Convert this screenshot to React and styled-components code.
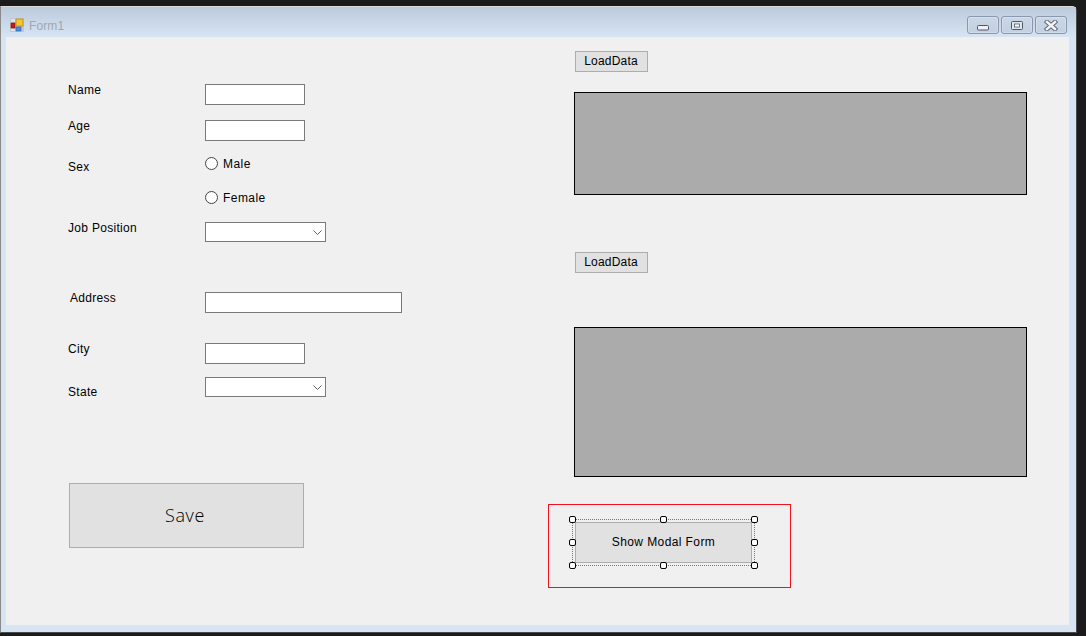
import styled, { createGlobalStyle } from "styled-components";

const GlobalStyle = createGlobalStyle`
    html, body {
        margin: 0;
        padding: 0;
        background: #1b1b1b;
    }
    * {
        box-sizing: border-box;
    }
`;

const FONT = `"Liberation Sans", Arial, sans-serif`;

// far edge of the selection frame, its dotted line sits 1px outside the padding box
const FAR = "calc(100% + 1px)";

function AppIcon() {
    return (
        <svg width="14" height="14" viewBox="0 0 14 14">
            <rect x="0" y="0" width="14" height="14" fill="#c4c8cd" />
            <rect x="1" y="1" width="4" height="3" fill="#dfe3e8" />
            <rect x="1" y="11" width="4" height="2" fill="#dfe3e8" />
            <rect x="1" y="5" width="4" height="5" fill="#c81a1a" stroke="#7a1010" strokeWidth="0.6" />
            <rect x="6" y="1" width="7" height="7" fill="#f6c531" stroke="#b98a12" strokeWidth="0.8" />
            <rect x="6" y="9" width="5" height="4" fill="#4a8be0" stroke="#2b5fa8" strokeWidth="0.6" />
        </svg>
    );
}

function MinGlyph() {
    return (
        <svg width="12" height="6" viewBox="0 0 12 6">
            <rect x="0.5" y="0.5" width="11" height="4.5" rx="1" fill="#eef1f5" stroke="#4e5568" />
        </svg>
    );
}

function MaxGlyph() {
    return (
        <svg width="12" height="9" viewBox="0 0 12 9">
            <rect x="0.5" y="0.5" width="11" height="8" rx="1" fill="#dfe6ee" stroke="#4e5568" />
            <rect x="3.5" y="3" width="5" height="3" fill="#fff" stroke="#4e5568" strokeWidth="0.8" />
        </svg>
    );
}

function CloseGlyph() {
    return (
        <svg width="14" height="11" viewBox="0 0 14 11">
            <path d="M3 2 L11 9 M11 2 L3 9" stroke="#5a6274" strokeWidth="4.4" strokeLinecap="square" />
            <path d="M3 2 L11 9 M11 2 L3 9" stroke="#f2f4f7" strokeWidth="2.6" strokeLinecap="square" />
        </svg>
    );
}

function Chevron() {
    return (
        <svg width="9" height="5" viewBox="0 0 9 5">
            <path d="M0.5 0.5 L4.5 4.5 L8.5 0.5" fill="none" stroke="#606060" strokeWidth="1" />
        </svg>
    );
}

function App() {
    return (
        <Page>
            <GlobalStyle />
            <Window>
                <TitleBar>
                    <AppIcon />
                    <TitleText>Form1</TitleText>
                    <WindowButtons>
                        <WindowButton $low><MinGlyph /></WindowButton>
                        <WindowButton><MaxGlyph /></WindowButton>
                        <WindowButton><CloseGlyph /></WindowButton>
                    </WindowButtons>
                </TitleBar>

                <Canvas>
                    <LeftColumn>
                        <Row $top={47}>
                            <Label $dy={-1}>Name</Label>
                            <TextBox />
                        </Row>
                        <Row $top={15}>
                            <Label $dy={-1}>Age</Label>
                            <TextBox />
                        </Row>
                        <Row $top={13}>
                            <Label $dy={6}>Sex</Label>
                            <Radio>
                                <RadioDot />
                                <RadioText>Male</RadioText>
                            </Radio>
                        </Row>
                        <Row $top={14}>
                            <span />
                            <Radio>
                                <RadioDot />
                                <RadioText>Female</RadioText>
                            </Radio>
                        </Row>
                        <Row $top={16}>
                            <Label $dy={-1}>Job Position</Label>
                            <ComboBox><Chevron /></ComboBox>
                        </Row>
                        <Row $top={50}>
                            <Label $dy={-1} $indent={2}>Address</Label>
                            <TextBox $width={197} />
                        </Row>
                        <Row $top={30}>
                            <Label $dy={-1}>City</Label>
                            <TextBox />
                        </Row>
                        <Row $top={13}>
                            <Label $dy={8}>State</Label>
                            <ComboBox><Chevron /></ComboBox>
                        </Row>
                        <SaveButton>Save</SaveButton>
                    </LeftColumn>

                    <RightColumn>
                        <LoadButton $top={14}>LoadData</LoadButton>
                        <DataGrid $top={20} $height={103} />
                        <LoadButton $top={57}>LoadData</LoadButton>
                        <DataGrid $top={54} $height={150} />

                        <Highlight>
                            <Selection>
                                <ModalButton>Show Modal Form</ModalButton>
                                <Handle $x="0%" $y="0%" />
                                <Handle $x="50%" $y="0%" />
                                <Handle $x={FAR} $y="0%" />
                                <Handle $x="0%" $y="50%" />
                                <Handle $x={FAR} $y="50%" />
                                <Handle $x="0%" $y={FAR} />
                                <Handle $x="50%" $y={FAR} />
                                <Handle $x={FAR} $y={FAR} />
                            </Selection>
                        </Highlight>
                    </RightColumn>
                </Canvas>
            </Window>
        </Page>
    );
}

const Page = styled.div`
    width: 1086px;
    height: 636px;
    padding-top: 6px;
    overflow: hidden;
    background: #1b1b1b;
    font-family: ${FONT};
`;

const Window = styled.div`
    width: 1077px;
    height: 627px;
    display: flex;
    flex-direction: column;
    padding: 0 7px 7px 5px;
    background: #d6e4f3;
    border: 1px solid #4a4a4a;
    border-top-color: #d8d8d8;
    border-left-color: #8a8a8a;
    border-top-right-radius: 5px;
`;

const TitleBar = styled.div`
    height: 30px;
    margin: 0 -7px 0 -5px;
    padding: 6px 9px 0 9px;
    display: flex;
    align-items: center;
    flex-shrink: 0;
    background: linear-gradient(#bccbdc, #d6e4f3);
`;

const TitleText = styled.span`
    margin-left: 5px;
    padding-top: 2px;
    font-size: 12px;
    letter-spacing: 0.1px;
    color: #a3a7ad;
`;

const WindowButtons = styled.div`
    margin-left: auto;
    display: flex;
    gap: 2px;
`;

const WindowButton = styled.div`
    width: 32px;
    height: 18px;
    padding-top: ${({ $low }) => ($low ? 5 : 0)}px;
    display: flex;
    align-items: center;
    justify-content: center;
    border: 1px solid #8a97ae;
    border-radius: 3px;
    background: linear-gradient(#cad7e5, #c2d0e0);
    box-shadow: inset 0 0 0 1px rgba(255, 255, 255, 0.25);
`;

const Canvas = styled.div`
    flex: 1;
    display: flex;
    background: #f0f0f0;
`;

const LeftColumn = styled.div`
    width: 568px;
    padding-left: 62px;
    flex-shrink: 0;
`;

const Row = styled.div`
    margin-top: ${({ $top }) => $top}px;
    display: grid;
    grid-template-columns: 137px 1fr;
    align-items: start;
`;

const Label = styled.div`
    margin-top: ${({ $dy }) => $dy}px;
    padding-left: ${({ $indent }) => $indent || 0}px;
    font-size: 12px;
    line-height: 14px;
    letter-spacing: 0.3px;
    color: #000;
`;

const TextBox = styled.div`
    width: ${({ $width }) => $width || 100}px;
    height: 21px;
    background: #fff;
    border: 1px solid #7a7a7a;
`;

const ComboBox = styled.div`
    width: 121px;
    height: 20px;
    padding-right: 3px;
    display: flex;
    align-items: center;
    justify-content: flex-end;
    background: #fff;
    border: 1px solid #7a7a7a;
`;

const Radio = styled.div`
    height: 18px;
    display: flex;
    align-items: center;
    gap: 5px;
    font-size: 12px;
    letter-spacing: 0.45px;
    color: #000;
`;

const RadioText = styled.span`
    padding-top: 2px;
`;

const RadioDot = styled.span`
    width: 13px;
    height: 13px;
    border-radius: 50%;
    background: #fff;
    border: 1px solid #444;
`;

const SaveButton = styled.div`
    width: 235px;
    height: 65px;
    margin: 84px 0 0 1px;
    padding: 0 3px 2px 0;
    display: flex;
    align-items: center;
    justify-content: center;
    font-family: "Open Sans", ${FONT};
    font-size: 18px;
    font-weight: 300;
    letter-spacing: 0.6px;
    color: #000;
    background: #e1e1e1;
    border: 1px solid #adadad;
`;

const RightColumn = styled.div`
    flex: 1;
`;

const LoadButton = styled.div`
    width: 73px;
    height: 21px;
    margin: ${({ $top }) => $top}px 0 0 1px;
    padding: 0 1px 1px 0;
    display: flex;
    align-items: center;
    justify-content: center;
    font-size: 12px;
    letter-spacing: 0.2px;
    color: #000;
    background: #e1e1e1;
    border: 1px solid #adadad;
`;

const DataGrid = styled.div`
    width: 453px;
    height: ${({ $height }) => $height}px;
    margin-top: ${({ $top }) => $top}px;
    background: #ababab;
    border: 1px solid #000;
`;

const Highlight = styled.div`
    width: 243px;
    height: 84px;
    margin: 27px 0 0 -26px;
    padding: 14px 0 0 23px;
    border: 1px solid #f5101e;
`;

const Selection = styled.div`
    position: relative;
    width: 183px;
    height: 47px;
    padding: 2px;
    border: 1px dotted #777;
`;

const ModalButton = styled.div`
    height: 100%;
    padding-bottom: 1px;
    display: flex;
    align-items: center;
    justify-content: center;
    font-size: 12px;
    letter-spacing: 0.4px;
    color: #000;
    background: #e1e1e1;
    border: 1px solid #adadad;
`;

const Handle = styled.span`
    position: absolute;
    left: ${({ $x }) => $x};
    top: ${({ $y }) => $y};
    width: 7px;
    height: 7px;
    transform: translate(calc(-50% - 0.5px), calc(-50% - 0.5px));
    background: #fff;
    border: 1px solid #000;
    border-radius: 2px;
`;

export default App;
